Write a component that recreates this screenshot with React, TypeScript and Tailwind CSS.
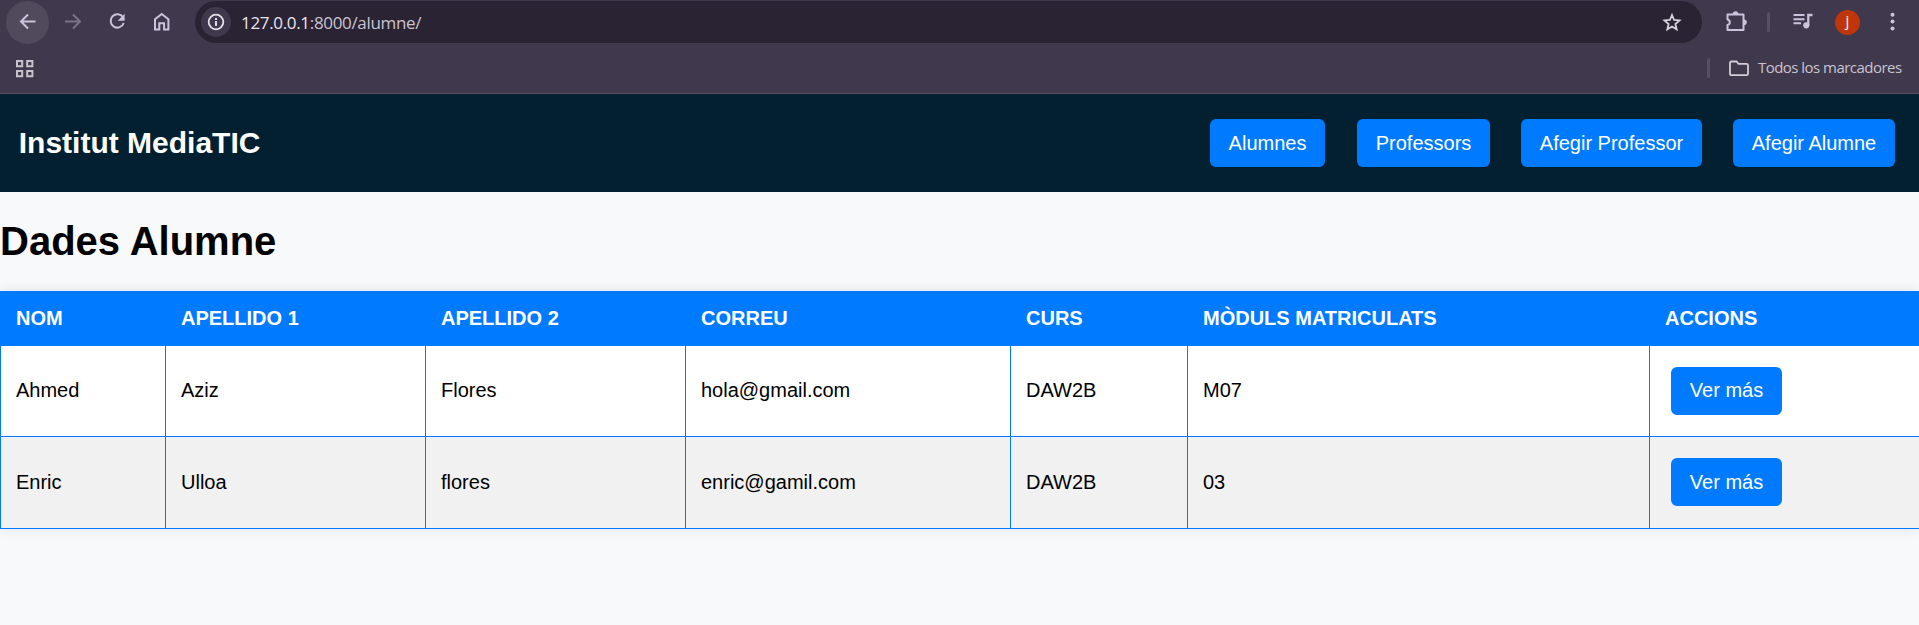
import type { ReactNode } from "react";

const students = [
  { nom: "Ahmed", ap1: "Aziz", ap2: "Flores", correu: "hola@gmail.com", curs: "DAW2B", moduls: "M07" },
  { nom: "Enric", ap1: "Ulloa", ap2: "flores", correu: "enric@gamil.com", curs: "DAW2B", moduls: "03" },
];

const headings = ["NOM", "APELLIDO 1", "APELLIDO 2", "CORREU", "CURS", "MÒDULS MATRICULATS", "ACCIONS"];

function Icon({ children, className = "" }: { children: ReactNode; className?: string }) {
  return (
    <svg viewBox="0 0 24 24" width="24" height="24" fill="none" stroke="currentColor" strokeWidth="2" className={"shrink-0 " + className}>
      {children}
    </svg>
  );
}

function BrowserBar() {
  return (
    <div className="flex h-[94px] flex-col border-b border-[#574e62] bg-[#40384c] text-[#cdc2dc]">
      <div className="flex h-[43px] items-center pt-px">
        <div className="ml-[6px] flex size-[43px] shrink-0 items-center justify-center rounded-full bg-[#514a5c]">
          <Icon>
            <path d="M19.500 11.500H5.500M12 4.500l-7 7 7 7" />
          </Icon>
        </div>
        <Icon className="ml-[12px] text-[#7b7287]">
          <path d="M4 11.500h14.500M12 4.500l7 7-7 7" />
        </Icon>
        <Icon className="ml-[20px]">
          <path d="M18 7.300A6.700 6.700 0 1 0 18.700 13" />
          <path d="M19.600 3.800v6.900h-6.900z" fill="currentColor" stroke="none" />
        </Icon>
        <Icon className="ml-[21px]">
          <path d="M5 19.500V9.300l6.700-5.300 6.700 5.300v10.200h-4.300v-6.300H9.300v6.300z" />
        </Icon>
        <div className="ml-[21px] flex h-[42px] w-[1507px] shrink-0 items-center rounded-full bg-[#2a2333]">
          <div className="ml-[6px] flex size-[30px] items-center justify-center rounded-full bg-[#40384c] text-[#e6e0ec]">
            <Icon>
              <circle cx="12" cy="12" r="7.300" strokeWidth="1.800" />
              <path d="M12 11v5M12 8v2" strokeWidth="1.900" />
            </Icon>
          </div>
          <div className="ml-[10px] pt-px font-['Open_Sans',sans-serif] text-[17px] leading-6 tracking-[-0.33px] text-[#c9c3d0]">
            <span className="text-[#eae5ef]">127.0.0.1</span>:8000/alumne/
          </div>
          <Icon className="mr-[18px] ml-auto text-[#d6d1da]">
            <path d="M12 5l2.100 5 5.400.450-4.100 3.550 1.250 5.300L12 16.500l-4.650 2.800L8.600 14l-4.100-3.550 5.400-.45z" strokeWidth="1.800" />
          </Icon>
        </div>
        <Icon className="ml-[22px]">
          <path d="M3.500 4.500h16v15.500h-16v-5a2.800 2.800 0 0 0 0-5.500z" strokeLinejoin="round" />
          <path d="M8.700 4a2.800 2.800 0 0 1 5.600 0zM20 9.500a2.800 2.800 0 0 1 0 5.600z" fill="currentColor" stroke="none" />
        </Icon>
        <div className="ml-[19px] h-5 w-[3px] rounded-sm bg-[#584f64]" />
        <Icon className="ml-[21px]">
          <path d="M2.500 5h11M2.500 9.200h11M2.500 13.300h7.500" />
          <path d="M17.300 15V5H21.500" strokeWidth="2.300" />
          <circle cx="15.300" cy="15.300" r="3.100" fill="currentColor" stroke="none" />
        </Icon>
        <div className="ml-[20px] flex size-[25px] shrink-0 items-start justify-center rounded-full bg-[#bf360c] font-['Open_Sans',sans-serif] text-[15px] leading-[20px] text-white">
          j
        </div>
        <Icon className="ml-[20px]">
          <g fill="currentColor" stroke="none">
            <circle cx="12.500" cy="4.800" r="2" />
            <circle cx="12.500" cy="11.500" r="2" />
            <circle cx="12.500" cy="18.500" r="2" />
          </g>
        </Icon>
      </div>
      <div className="flex h-[50px] items-center">
        <Icon className="ml-[12.500px] text-[#c7c2cb]">
          <path d="M4 5h5.200v5.200H4zM14.200 5h5.200v5.200h-5.200zM4 15h5.200v5.200H4zM14.200 15h5.200v5.200h-5.200z" />
        </Icon>
        <div className="ml-auto h-5 w-[3px] rounded-sm bg-[#584f64]" />
        <Icon className="ml-[17px] text-[#d2ccd6]">
          <path d="M3 7q0-1.500 1.500-1.500h5l2 2.300h8q1.500 0 1.500 1.500v8.400q0 1.500-1.500 1.500h-15q-1.500 0-1.500-1.500z" strokeWidth="1.800" />
        </Icon>
        <div className="mr-[17px] mb-[3px] ml-[7px] w-[144px] font-['Open_Sans',sans-serif] text-[15px] leading-5 tracking-[-0.53px] whitespace-nowrap text-[#c9c3d0]">
          Todos los marcadores
        </div>
      </div>
    </div>
  );
}

function Button({ children, className = "" }: { children: ReactNode; className?: string }) {
  return (
    <a className={"flex h-12 items-center justify-center rounded-[6px] bg-[#007bff] text-white " + className}>{children}</a>
  );
}

export default function App() {
  return (
    <div className="flex h-[625px] w-[1919px] flex-col overflow-hidden bg-[#f8f9fa] font-['Liberation_Sans',Arial,sans-serif] text-[20px] leading-[22px] text-black">
      <BrowserBar />
      <header className="flex h-[98px] shrink-0 items-center justify-between bg-[#032030] pr-[24px] pl-[18.75px]">
        <div className="mb-px text-[30px] leading-[33px] font-bold text-white">Institut MediaTIC</div>
        <nav className="flex">
          <Button className="w-[115px]">Alumnes</Button>
          <Button className="ml-[32px] w-[133px]">Professors</Button>
          <Button className="ml-[31px] w-[181px]">Afegir Professor</Button>
          <Button className="ml-[31px] w-[162px]">Afegir Alumne</Button>
        </nav>
      </header>
      <h1 className="mt-[27px] text-[40px] leading-[45px] font-bold">Dades Alumne</h1>
      <table className="mt-[27px] w-[1919px] table-fixed border-separate border-spacing-0 bg-white text-left shadow-[0_0_12.5px_rgba(0,0,0,0.1)]">
        <colgroup>
          <col className="w-[165px]" />
          <col className="w-[260px]" />
          <col className="w-[260px]" />
          <col className="w-[325px]" />
          <col className="w-[177px]" />
          <col className="w-[462px]" />
          <col className="w-[270px]" />
        </colgroup>
        <thead>
          <tr className="h-[55px] bg-[#007bff] text-white">
            {headings.map((h) => (
              <th key={h} className="pt-0 pb-px pl-[16px] font-bold">{h}</th>
            ))}
          </tr>
        </thead>
        <tbody>
          {students.map((s, i) => (
            <tr key={s.nom} className={i === 0 ? "h-[91px]" : "h-[92px] bg-[#f1f1f1]"}>
              {[s.nom, s.ap1, s.ap2, s.correu, s.curs, s.moduls].map((value, c) => (
                <td key={c} className={"border-b border-l border-[#007bff] pt-0 pl-[15px] " + (i === 0 ? "pb-[2px]" : "pb-px")}>{value}</td>
              ))}
              <td className={"border-b border-l border-[#007bff] pt-0 pl-[21px] " + (i === 0 ? "pb-0" : "pb-px")}>
                <Button className={i === 0 ? "w-[111px] pb-[2px]" : "w-[111px]"}>Ver más</Button>
              </td>
            </tr>
          ))}
        </tbody>
      </table>
    </div>
  );
}
